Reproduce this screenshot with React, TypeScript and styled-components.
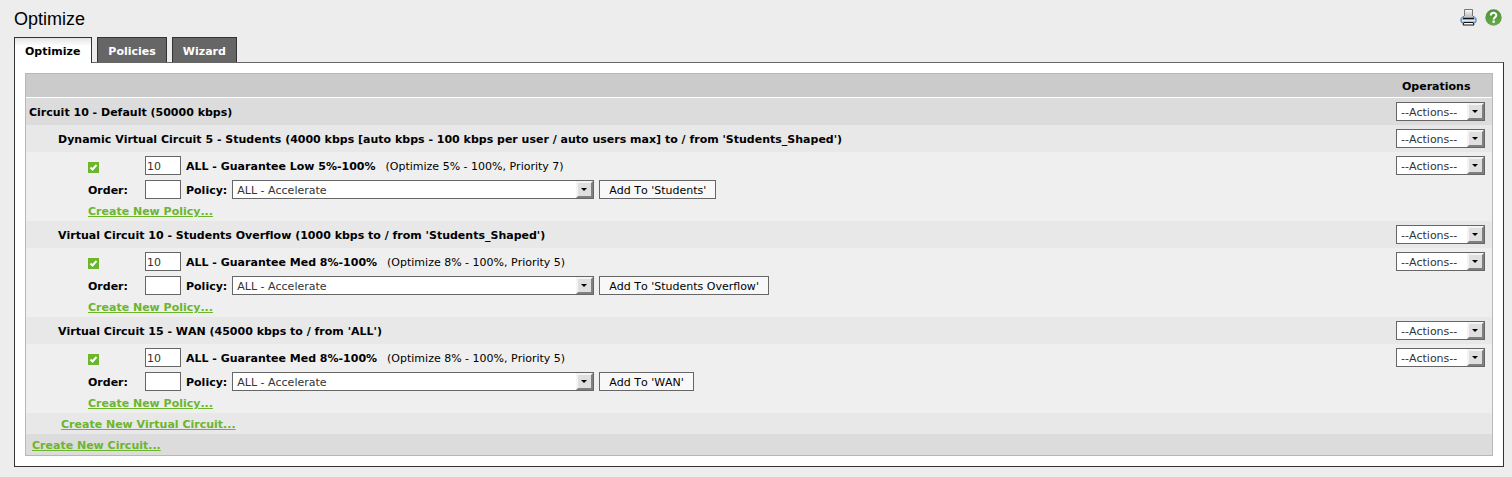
import React from "react";
import styled, { createGlobalStyle, css } from "styled-components";

const GlobalStyle = createGlobalStyle`
  *, *::before, *::after { box-sizing: border-box; }
  body {
    margin: 0;
    background: #ededed;
    color: #000;
    font: 11px/13px "DejaVu Sans", Verdana, sans-serif;
    font-kerning: none;
    text-rendering: optimizeSpeed;
  }
`;

const Page = styled.div`
  padding: 0 8px 10px 14px;
`;

const TopBar = styled.header`
  display: flex;
  align-items: center;
  justify-content: space-between;
  height: 37px;
  padding-right: 2px;
`;

const Title = styled.h1`
  margin: 0;
  font: 18px/22px "Liberation Sans", Arial, sans-serif;
`;

const Tools = styled.div`
  display: flex;
  gap: 8px;
  padding-bottom: 2px;
`;

const IconButton = styled.button`
  display: block;
  width: 17px;
  height: 17px;
  padding: 0;
  border: 0;
  background: none;
  svg { display: block; }
`;

const Tabs = styled.nav`
  display: flex;
  gap: 5px;
`;

const Tab = styled.a<{ $active?: boolean }>`
  position: relative;
  height: 25px;
  padding: 7px 10px 0;
  border: 1px solid #333;
  border-bottom: 0;
  background: #666;
  color: #fff;
  font-weight: bold;
  text-decoration: none;
  ${(p) =>
    p.$active &&
    css`
      height: 26px;
      margin-bottom: -1px;
      padding-right: 11px;
      background: linear-gradient(#e4e4e4, #fff 8px);
      color: #000;
    `}
`;

const Panel = styled.main`
  padding: 10px;
  border: 1px solid #333;
  border-top-color: #666;
  background: #fff;
`;

const Grid = styled.table`
  width: 100%;
  border: 1px solid #b8b8b8;
  border-spacing: 0;
  background: #efefef;
`;

const HeadCell = styled.th`
  height: 24px;
  padding: 2px 7px 0 10px;
  border-bottom: 1px solid #fff;
  background: #cbcbcb;
  text-align: left;
`;

type Tone = "circuit" | "virtual" | "policy";
const tones: Record<Tone, string> = {
  circuit: "#dcdcdc",
  virtual: "#e8e8e8",
  policy: "#efefef",
};

const Row = styled.tr<{ $tone: Tone }>`
  background: ${(p) => tones[p.$tone]};
`;

const Cell = styled.td<{ $indent: number }>`
  padding: 0 0 0 ${(p) => p.$indent}px;
`;

const CircuitTitle = styled.td<{ $indent: number }>`
  padding: 2px 0 0 ${(p) => p.$indent}px;
  font-weight: bold;
`;

const ActionCell = styled.td`
  width: 100px;
  height: 27px;
  padding: 4px 7px 4px 4px;
`;

const Line = styled.div`
  display: flex;
  align-items: center;
  height: 21px;
`;

const Lead = styled.div`
  display: flex;
  width: 57px;
  padding-top: 2px;
  font-weight: bold;
`;

const PolicyText = styled.span`
  display: flex;
  gap: 10px;
  margin-left: 5px;
  padding-top: 2px;
`;

const PolicyLabel = styled.label`
  margin: 0 5px;
  padding-top: 2px;
  font-weight: bold;
`;

const OrderInput = styled.input`
  width: 36px;
  height: 19px;
  padding: 1px 1px 0;
  border: 1px solid #666;
  border-radius: 0;
  background: #fff;
  color: #333;
  font: inherit;
`;

const SelectBox = styled.span<{ $wide?: boolean }>`
  position: relative;
  display: block;
  width: ${(p) => (p.$wide ? 362 : 89)}px;
  height: 19px;
  &::before {
    content: "";
    position: absolute;
    top: 1px;
    right: 1px;
    width: 17px;
    height: 17px;
    border: 2px solid;
    border-color: #f4f4f4 #808080 #808080 #f4f4f4;
    background: #dfdfdf;
    pointer-events: none;
  }
  &::after {
    content: "";
    position: absolute;
    top: 8px;
    right: 7px;
    border: 3px solid transparent;
    border-top-color: #000;
    border-bottom: 0;
    pointer-events: none;
  }
`;

const SelectField = styled.select`
  display: block;
  width: 100%;
  height: 19px;
  padding: 2px 4px 0;
  border: 1px solid #666;
  border-radius: 0;
  appearance: none;
  background: #fff;
  color: #333;
  font: inherit;
`;

const AddButton = styled.button`
  height: 19px;
  margin-left: 5px;
  padding: 1px 9px 0;
  border: 1px solid #666;
  border-radius: 0;
  background: #f8f8f8;
  color: #000;
  font: inherit;
`;

const CreateLink = styled.a`
  padding-top: 2px;
  color: #6cb52d;
  font-weight: bold;
`;

const CheckBox = styled.span`
  position: relative;
  width: 11px;
  height: 11px;
  margin-top: 1px;
  svg {
    position: absolute;
    inset: 0;
    pointer-events: none;
  }
`;

const CheckInput = styled.input`
  display: block;
  width: 11px;
  height: 11px;
  margin: 0;
  appearance: none;
  background: #6cb52d;
`;

function Printer() {
  return (
    <svg width="17" height="17" viewBox="0 0 17 17" aria-hidden="true">
      <defs>
        <linearGradient id="paper" x2="0" y2="1">
          <stop stopColor="#fff" />
          <stop offset="1" stopColor="#b9b9c4" />
        </linearGradient>
      </defs>
      <path d="M4.500 8V.5h8V8z" fill="url(#paper)" stroke="#777" />
      <path d="M3 7.500h11l2 2v3l-1 1.500H2l-1-1.500v-3z" fill="#9cbfea" stroke="#567298" />
      <path d="M4 7h9v2.500H4z" fill="#c4c6d0" />
      <path d="M3 9.500h11" stroke="#111" strokeWidth="1.500" />
      <path d="M2 11.500h13" stroke="#d7e9ff" strokeWidth="1.500" />
      <path d="M4 13.500h9l1 2.500H3z" fill="#fff" stroke="#111" />
    </svg>
  );
}

function Help() {
  return (
    <svg width="17" height="17" viewBox="0 0 17 17" aria-hidden="true">
      <defs>
        <linearGradient id="help-fill" x2="0" y2="1">
          <stop stopColor="#4d9138" />
          <stop offset="1" stopColor="#68aa4c" />
        </linearGradient>
      </defs>
      <circle cx="8.500" cy="8.500" r="8.200" fill="url(#help-fill)" />
      <path d="M5.800 6.500c0-3.600 5.500-3.400 5.500-.3 0 2-2.600 2-2.600 4.200" fill="none" stroke="#fff" strokeWidth="2" />
      <rect x="7.500" y="11.500" width="2.300" height="2.300" fill="#fff" />
    </svg>
  );
}

function Actions({ name }: { name: string }) {
  return (
    <ActionCell>
      <SelectBox>
        <SelectField aria-label={`Actions for ${name}`}>
          <option>--Actions--</option>
        </SelectField>
      </SelectBox>
    </ActionCell>
  );
}

const circuits = [
  {
    id: "students",
    title: "Dynamic Virtual Circuit 5 - Students (4000 kbps [auto kbps - 100 kbps per user / auto users max] to / from 'Students_Shaped')",
    policy: "ALL - Guarantee Low 5%-100%",
    detail: "(Optimize 5% - 100%, Priority 7)",
    target: "Students",
  },
  {
    id: "overflow",
    title: "Virtual Circuit 10 - Students Overflow (1000 kbps to / from 'Students_Shaped')",
    policy: "ALL - Guarantee Med 8%-100%",
    detail: "(Optimize 8% - 100%, Priority 5)",
    target: "Students Overflow",
  },
  {
    id: "wan",
    title: "Virtual Circuit 15 - WAN (45000 kbps to / from 'ALL')",
    policy: "ALL - Guarantee Med 8%-100%",
    detail: "(Optimize 8% - 100%, Priority 5)",
    target: "WAN",
  },
];

function VirtualCircuit({ item }: { item: (typeof circuits)[number] }) {
  return (
    <>
      <Row $tone="virtual">
        <CircuitTitle $indent={32}>{item.title}</CircuitTitle>
        <Actions name={item.target} />
      </Row>
      <Row $tone="policy">
        <Cell $indent={62}>
          <Line>
            <Lead>
              <CheckBox>
                <CheckInput type="checkbox" defaultChecked aria-label={`Enable ${item.policy}`} />
                <svg width="11" height="11" viewBox="0 0 11 11" aria-hidden="true">
                  <path d="M2.500 5.500l2 2 4-4.500" fill="none" stroke="#fff" strokeWidth="2" />
                </svg>
              </CheckBox>
            </Lead>
            <OrderInput aria-label={`Order of ${item.policy}`} defaultValue="10" />
            <PolicyText>
              <b>{item.policy}</b>
              <span>{item.detail}</span>
            </PolicyText>
          </Line>
        </Cell>
        <Actions name={item.policy} />
      </Row>
      <Row $tone="policy">
        <Cell $indent={62} colSpan={2}>
          <Line>
            <Lead><label htmlFor={`order-${item.id}`}>Order:</label></Lead>
            <OrderInput id={`order-${item.id}`} />
            <PolicyLabel htmlFor={`policy-${item.id}`}>Policy:</PolicyLabel>
            <SelectBox $wide>
              <SelectField id={`policy-${item.id}`}>
                <option>ALL - Accelerate</option>
              </SelectField>
            </SelectBox>
            <AddButton type="button">Add To '{item.target}'</AddButton>
          </Line>
          <Line><CreateLink href="#policy">Create New Policy...</CreateLink></Line>
        </Cell>
      </Row>
    </>
  );
}

export default function App() {
  return (
    <>
      <GlobalStyle />
      <Page>
        <TopBar>
          <Title>Optimize</Title>
          <Tools>
            <IconButton type="button" aria-label="Print"><Printer /></IconButton>
            <IconButton type="button" aria-label="Help"><Help /></IconButton>
          </Tools>
        </TopBar>
        <Tabs>
          <Tab href="#optimize" $active aria-current="page">Optimize</Tab>
          <Tab href="#policies">Policies</Tab>
          <Tab href="#wizard">Wizard</Tab>
        </Tabs>
        <Panel>
          <Grid>
            <thead>
              <tr>
                <HeadCell aria-label="Circuit" />
                <HeadCell>Operations</HeadCell>
              </tr>
            </thead>
            <tbody>
              <Row $tone="circuit">
                <CircuitTitle $indent={3}>Circuit 10 - Default (50000 kbps)</CircuitTitle>
                <Actions name="Circuit 10" />
              </Row>
              {circuits.map((item) => <VirtualCircuit key={item.id} item={item} />)}
              <Row $tone="virtual">
                <Cell $indent={35} colSpan={2}>
                  <Line><CreateLink href="#virtual-circuit">Create New Virtual Circuit...</CreateLink></Line>
                </Cell>
              </Row>
              <Row $tone="circuit">
                <Cell $indent={6} colSpan={2}>
                  <Line><CreateLink href="#circuit">Create New Circuit...</CreateLink></Line>
                </Cell>
              </Row>
            </tbody>
          </Grid>
        </Panel>
      </Page>
    </>
  );
}
